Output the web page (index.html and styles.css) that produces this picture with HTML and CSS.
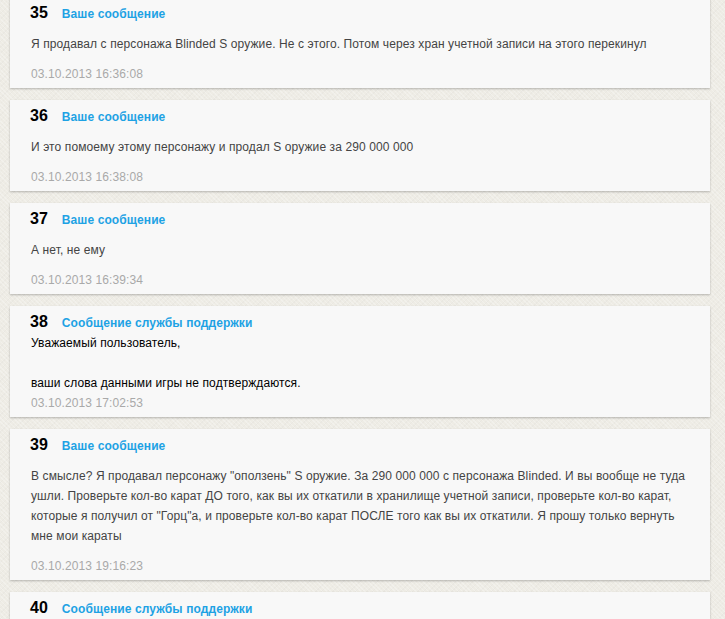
FILE: index.html
```html
<!DOCTYPE html>
<html lang="ru">
<head>
  <meta charset="UTF-8">
  <title>История обращения</title>
  <link rel="stylesheet" href="styles.css">
</head>
<body>
  <div class="messages">
    <div class="message">
      <div class="message-head"><span class="num">35</span><span class="author">Ваше сообщение</span></div>
      <p class="text">Я продавал с персонажа Blinded S оружие. Не с этого. Потом через хран учетной записи на этого перекинул</p>
      <div class="date">03.10.2013 16:36:08</div>
    </div>
    <div class="message">
      <div class="message-head"><span class="num">36</span><span class="author">Ваше сообщение</span></div>
      <p class="text">И это помоему этому персонажу и продал S оружие за 290 000 000</p>
      <div class="date">03.10.2013 16:38:08</div>
    </div>
    <div class="message">
      <div class="message-head"><span class="num">37</span><span class="author">Ваше сообщение</span></div>
      <p class="text">А нет, не ему</p>
      <div class="date">03.10.2013 16:39:34</div>
    </div>
    <div class="message support">
      <div class="message-head"><span class="num">38</span><span class="author">Сообщение службы поддержки</span></div>
      <div class="text">Уважаемый пользователь,<br><br>ваши слова данными игры не подтверждаются.</div>
      <div class="date">03.10.2013 17:02:53</div>
    </div>
    <div class="message">
      <div class="message-head"><span class="num">39</span><span class="author">Ваше сообщение</span></div>
      <p class="text">В смысле? Я продавал персонажу "оползень" S оружие. За 290 000 000 с персонажа Blinded. И вы вообще не туда ушли. Проверьте кол-во карат ДО того, как вы их откатили в хранилище учетной записи, проверьте кол-во карат, которые я получил от "Горц"а, и проверьте кол-во карат ПОСЛЕ того как вы их откатили. Я прошу только вернуть мне мои караты</p>
      <div class="date">03.10.2013 19:16:23</div>
    </div>
    <div class="message support">
      <div class="message-head"><span class="num">40</span><span class="author">Сообщение службы поддержки</span></div>
      <div class="text">Уважаемый пользователь,<br><br>информация проверена.</div>
      <div class="date">03.10.2013 19:40:11</div>
    </div>
  </div>
</body>
</html>
```

FILE: styles.css
```css
body {
  margin: 0;
  padding: 0 15px 0 10px;
  background-color: #eeece5;
  background-image:
    repeating-linear-gradient(45deg, rgba(255,255,255,0.25) 0 1px, transparent 1px 3px),
    repeating-linear-gradient(-45deg, rgba(0,0,0,0.02) 0 1px, transparent 1px 4px);
  font-family: "Liberation Sans", Arial, sans-serif;
  font-size: 12px;
  letter-spacing: 0.1px;
  color: #444;
  overflow: hidden;
}

.messages {
  margin-top: -3px;
}

.message {
  background: #f8f8f8;
  margin-bottom: 12px;
  padding: 5px 22px 4px 20px;
  box-shadow: 0 1px 2px rgba(0, 0, 0, 0.25);
}

.message-head {
  height: 22px;
  line-height: 22px;
}

.num {
  font-size: 16px;
  font-weight: bold;
  color: #000;
  margin-right: 14px;
  letter-spacing: 0;
}

.author {
  font-weight: bold;
  color: #1ea2e4;
}

.text {
  line-height: 20px;
  margin: 10px 0 10px 1px;
}

.support .text {
  margin: 0 0 0 1px;
  color: #000;
}

.date {
  line-height: 20px;
  color: #a9a9a9;
  padding-left: 1px;
}
```
